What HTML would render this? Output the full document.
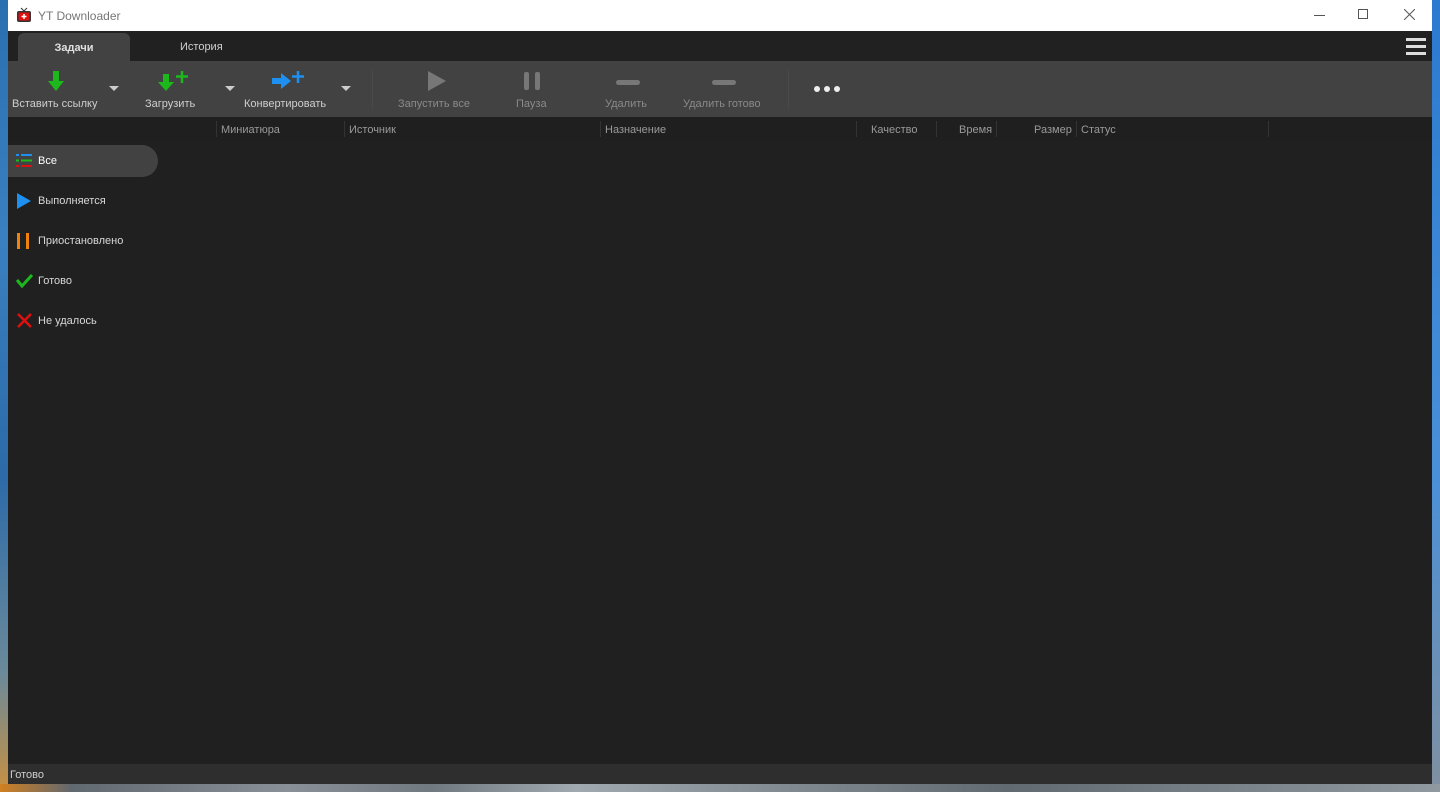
<!DOCTYPE html>
<html><head><meta charset="utf-8"><style>
*{margin:0;padding:0;box-sizing:border-box}
body{width:1440px;height:792px;overflow:hidden;position:relative;background:#5a6a7a;font-family:"Liberation Sans","DejaVu Sans",sans-serif;font-size:11px}
.abs{position:absolute}
#left{left:0;top:0;width:8px;height:792px;background:linear-gradient(#2a6fb0,#3a80c0 30%,#2c6aa8 60%,#6b8a9a 85%,#c89040)}
#right{left:1432px;top:0;width:8px;height:792px;background:linear-gradient(#2a7ad0,#4a90d8 60%,#8090a0)}
#bottom{left:0;top:784px;width:1440px;height:8px;background:linear-gradient(90deg,#d08020,#606870 5%,#8a9098 20%,#707880 30%,#a0a8b0 40%,#606a70 70%,#9098a0)}
#win{left:8px;top:0;width:1424px;height:784px;background:#202020}
#title{left:0;top:0;width:1424px;height:31px;background:#fff}
#tabs{left:0;top:31px;width:1424px;height:30px;background:#212121}
#tb{left:0;top:61px;width:1424px;height:56px;background:#424242}
#hdr{left:0;top:117px;width:1424px;height:24px;background:#1f1f1f}
#status{left:0;top:764px;width:1424px;height:20px;background:#2e2e2e;color:#cfcfcf;font-size:11px;padding:5px 2px}
.tl{color:#cfcfcf;font-size:11px;text-align:center;position:absolute;top:36px}
.dis{color:#8a8a8a}
.h{position:absolute;top:7px;color:#9a9a9a;font-size:11px}
.sep{position:absolute;top:4px;width:1px;height:16px;background:#333}
.side{position:absolute;left:30px;color:#d8d8d8;font-size:11px}
.caret{position:absolute;top:25px;width:0;height:0;border-left:5px solid transparent;border-right:5px solid transparent;border-top:5px solid #ccc}
</style></head><body>
<div class="abs" id="left"></div><div class="abs" id="right"></div><div class="abs" id="bottom"></div>
<div class="abs" id="win">
 <div class="abs" id="title">
  <svg class="abs" style="left:8px;top:7px" width="16" height="16" viewBox="0 0 16 16"><path d="M5 1l3 3 3-3" stroke="#333" fill="none"/><rect x="1" y="4" width="14" height="11" rx="2" fill="#333"/><rect x="2.5" y="5.5" width="11" height="8" rx="1" fill="#e01010"/><path d="M8 7v5M5.5 9.5h5" stroke="#fff" stroke-width="1.5"/></svg>
  <div class="abs" style="left:30px;top:9px;color:#777;font-size:12px">YT Downloader</div>
  <div class="abs" style="left:1306px;top:15px;width:11px;height:1px;background:#555"></div>
  <div class="abs" style="left:1350px;top:9px;width:10px;height:10px;border:1px solid #555"></div>
  <svg class="abs" style="left:1396px;top:9px" width="11" height="11"><path d="M0 0L11 11M11 0L0 11" stroke="#555"/></svg>
 </div>
 <div class="abs" id="tabs">
  <div class="abs" style="left:10px;top:2px;width:112px;height:28px;background:#424242;border-radius:6px 6px 0 0;color:#e0e0e0;font-weight:bold;font-size:11px;text-align:center;padding-top:9px">Задачи</div>
  <div class="abs" style="left:172px;top:10px;color:#d0d0d0;font-size:11px">История</div>
  <div class="abs" style="left:1398px;top:7px;width:20px;height:3px;background:#ddd"></div>
  <div class="abs" style="left:1398px;top:14px;width:20px;height:3px;background:#ddd"></div>
  <div class="abs" style="left:1398px;top:21px;width:20px;height:3px;background:#ddd"></div>
 </div>
 <div class="abs" id="tb">
  <svg class="abs" style="left:40px;top:10px" width="16" height="21"><path d="M5 0h6v10h5L8 20 0 10h5z" fill="#1cb81c"/></svg>
  <div class="tl" style="left:4px;top:37px">Вставить ссылку</div>
  <div class="caret" style="left:101px"></div>
  <svg class="abs" style="left:150px;top:10px" width="32" height="21"><path d="M5 3h6v8h5L8 20 0 11h5z" fill="#1cb81c"/><path d="M24 0v12M18 5.5h12" stroke="#1cb81c" stroke-width="2.5"/></svg>
  <div class="tl" style="left:137px;top:37px">Загрузить</div>
  <div class="caret" style="left:217px"></div>
  <svg class="abs" style="left:264px;top:10px" width="34" height="21"><path d="M0 7h9V2l10 8-10 8v-5H0z" fill="#1e90f0"/><path d="M26 0v12M20 5.5h12" stroke="#1e90f0" stroke-width="2.5"/></svg>
  <div class="tl" style="left:236px;top:37px">Конвертировать</div>
  <div class="caret" style="left:333px"></div>
  <div class="abs" style="left:364px;top:8px;width:1px;height:40px;background:#4a4a4a"></div>
  <svg class="abs" style="left:420px;top:10px" width="18" height="20"><path d="M0 0L18 10 0 20z" fill="#777"/></svg>
  <div class="tl dis" style="left:390px;top:37px">Запустить все</div>
  <div class="abs" style="left:516px;top:11px;width:5px;height:18px;background:#777;border-radius:2px"></div>
  <div class="abs" style="left:527px;top:11px;width:5px;height:18px;background:#777;border-radius:2px"></div>
  <div class="tl dis" style="left:508px;top:37px">Пауза</div>
  <div class="abs" style="left:608px;top:19px;width:24px;height:5px;background:#777;border-radius:3px"></div>
  <div class="tl dis" style="left:597px;top:37px">Удалить</div>
  <div class="abs" style="left:704px;top:19px;width:24px;height:5px;background:#777;border-radius:3px"></div>
  <div class="tl dis" style="left:675px;top:37px">Удалить готово</div>
  <div class="abs" style="left:780px;top:8px;width:1px;height:40px;background:#4a4a4a"></div>
  <div class="abs" style="left:806px;top:25px;width:6px;height:6px;border-radius:3px;background:#eee"></div>
  <div class="abs" style="left:816px;top:25px;width:6px;height:6px;border-radius:3px;background:#eee"></div>
  <div class="abs" style="left:826px;top:25px;width:6px;height:6px;border-radius:3px;background:#eee"></div>
 </div>
 <div class="abs" id="hdr">
  <div class="sep" style="left:208px"></div><div class="h" style="left:213px">Миниатюра</div>
  <div class="sep" style="left:336px"></div><div class="h" style="left:341px">Источник</div>
  <div class="sep" style="left:592px"></div><div class="h" style="left:597px">Назначение</div>
  <div class="sep" style="left:848px"></div><div class="h" style="left:863px">Качество</div>
  <div class="sep" style="left:928px"></div><div class="h" style="left:951px">Время</div>
  <div class="sep" style="left:988px"></div><div class="h" style="left:1026px">Размер</div>
  <div class="sep" style="left:1068px"></div><div class="h" style="left:1073px">Статус</div>
  <div class="sep" style="left:1260px"></div>
 </div>
 <div class="abs" style="left:0;top:145px;width:150px;height:32px;background:#424242;border-radius:0 16px 16px 0"></div>
 <svg class="abs" style="left:8px;top:154px" width="16" height="14"><path d="M0 1h3M5 1h11" stroke="#1e90f0" stroke-width="2"/><path d="M0 6.5h3M5 6.5h11" stroke="#1cb81c" stroke-width="2"/><path d="M0 12h3M5 12h11" stroke="#e01010" stroke-width="2"/></svg>
 <div class="side" style="top:155px;color:#fff">Все</div>
 <svg class="abs" style="left:9px;top:193px" width="14" height="16"><path d="M0 0L14 8 0 16z" fill="#1e90f0"/></svg>
 <div class="side" style="top:195px">Выполняется</div>
 <div class="abs" style="left:9px;top:233px;width:3px;height:16px;background:#f08010"></div>
 <div class="abs" style="left:18px;top:233px;width:3px;height:16px;background:#f08010"></div>
 <div class="side" style="top:235px">Приостановлено</div>
 <svg class="abs" style="left:8px;top:274px" width="17" height="14"><path d="M1 6l5 6L16 1" stroke="#1cb81c" stroke-width="3" fill="none"/></svg>
 <div class="side" style="top:275px">Готово</div>
 <svg class="abs" style="left:9px;top:313px" width="15" height="15"><path d="M1 1L14 14M14 1L1 14" stroke="#e01010" stroke-width="2.5"/></svg>
 <div class="side" style="top:315px">Не удалось</div>
 <div class="abs" id="status">Готово</div>
</div>
</body></html>
